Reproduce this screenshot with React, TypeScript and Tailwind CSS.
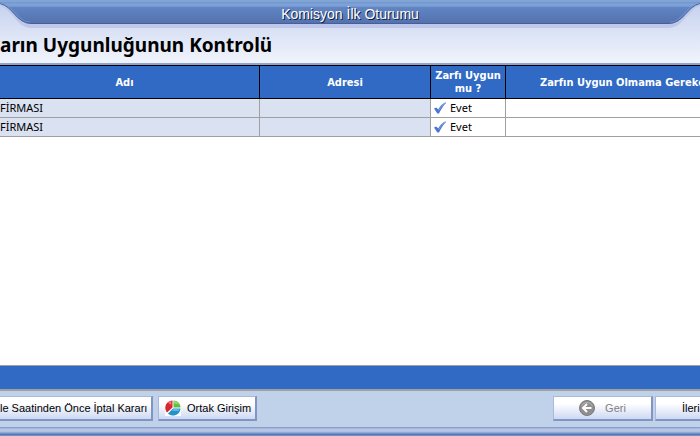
import clsx from "clsx";

const rows = [
  { name: "FİRMASI", address: "", suitable: "Evet", reason: "" },
  { name: "FİRMASI", address: "", suitable: "Evet", reason: "" },
];

const headCell = "border-black px-0.5 py-0 text-center align-middle font-bold";
const cell = "h-[19px] border-b border-[#a0a0a0] px-0 py-0 align-middle leading-4";

function TitleCorner({ flip }: { flip?: boolean }) {
  const id = flip ? "cornerR" : "cornerL";
  return (
    <svg viewBox="0 0 32 28" className={clsx("h-7 w-8 shrink-0", flip && "-scale-x-100")} aria-hidden="true">
      <defs>
        <linearGradient id={id} gradientUnits="userSpaceOnUse" x1="0" y1="0" x2="0" y2="24">
          <stop offset="0" stopColor="#82a6d3" />
          <stop offset="0.083" stopColor="#82a6d3" />
          <stop offset="0.125" stopColor="#648bc9" />
          <stop offset="0.167" stopColor="#8db1e8" />
          <stop offset="0.208" stopColor="#6c94d1" />
          <stop offset="0.25" stopColor="#8aabdc" />
          <stop offset="0.292" stopColor="#6286c1" />
          <stop offset="0.5" stopColor="#5c7fbd" />
          <stop offset="1" stopColor="#5371ac" />
        </linearGradient>
      </defs>
      <path d="M0 3C12 6 16 24 32 24V28C16 28 13 10 0 6Z" fill="#bfc8e9" />
      <path d="M0 0H32V24C16 24 13 6 0 3Z" fill={`url(#${id})`} />
      <path d="M2 4C14 7 17 22 30 22.500" fill="none" stroke="#7aa3dc" strokeOpacity="0.5" strokeWidth="2" />
      <path d="M0 3.500C13 6 16 23.500 32 23.500" fill="none" stroke="#465f9a" />
    </svg>
  );
}

function TitleBar() {
  return (
    <div className="flex">
      <TitleCorner />
      <div className="flex h-7 flex-1 flex-col border-b-4 border-[#bfc8e9]">
        <div className="flex-1 border-b border-[#465f9a] bg-[linear-gradient(#82a6d3_0px,#82a6d3_2px,#648bc9_3px,#8db1e8_4px,#6c94d1_5px,#8aabdc_6px,#6286c1_7px,#5c7fbd_12px,#5371ac_24px)] pt-1.5 text-center text-[14px] leading-[17px] text-white [text-shadow:1px_1px_0_#111b3c]">
          Komisyon İlk Oturumu
        </div>
      </div>
      <TitleCorner flip />
    </div>
  );
}

function CheckIcon() {
  return (
    <svg viewBox="0 0 12 12" className="size-3 shrink-0" aria-hidden="true">
      <path d="M0 6.500L2.300 5.500L4.200 7.500C6 4.500 8.500 1.800 11 0.500L12 1C9 4 7 7.500 5 11.500H3.300Z" fill="#4d74d0" />
      <path d="M11.500 0.800C8.500 3 6.500 6 4.800 8.500" fill="none" stroke="#86a1e0" />
    </svg>
  );
}

function PieIcon() {
  return (
    <svg viewBox="0 0 16 16" className="size-4 shrink-0" aria-hidden="true">
      <rect width="16" height="16" fill="#fff" />
      <path d="M7.500 0.500V7.500L2 12.500C-1.500 8 0.500 1 7.500 0.500Z" fill="#d9252f" />
      <path d="M3 2.800C4 1.800 5 1.200 6.300 1V5Z" fill="#f0787b" />
      <path d="M8.500 0.500C12.500 0.500 15.500 3.500 15.500 7.500H8.500Z" fill="#63bd45" />
      <path d="M9 1C11.500 1.200 13.500 2.500 14.300 4.500L9 3.500Z" fill="#94d670" />
      <path d="M8 8.500H15.500C15 15.500 7 17.500 3 13.500Z" fill="#2491cb" />
      <path d="M8.500 9H14.500L13.500 11H6.800Z" fill="#5ab8e4" />
    </svg>
  );
}

function BackIcon() {
  return (
    <svg viewBox="0 0 16 16" className="size-4 shrink-0" aria-hidden="true">
      <circle cx="8" cy="8" r="7.500" fill="#8f8f8f" stroke="#7b7b7b" />
      <path d="M2.500 6A6 6 0 0 1 13.500 6" fill="none" stroke="#b4b4b4" />
      <path d="M8 4L4 8L8 12M4.500 8H12.500" fill="none" stroke="#fff" strokeWidth="2" />
    </svg>
  );
}

function BarButton({ className, ...props }: React.ComponentProps<"button">) {
  return (
    <button
      type="button"
      className={clsx(
        "flex h-[25px] shrink-0 items-center border border-b-2 border-[#a9b8dc] border-r-[#8194c4] border-b-[#8194c4] bg-linear-to-b from-white from-30% to-[#cdd8f2] whitespace-nowrap",
        className
      )}
      {...props}
    />
  );
}

export default function App() {
  return (
    <div className="flex min-h-screen flex-col overflow-hidden bg-white font-['Liberation_Sans',Arial,sans-serif] text-[11px] text-black">
      <header className="border-b-2 border-[#8da4d3] bg-linear-to-b from-[#c3d0ed] to-[#f1f4fc]">
        <TitleBar />
        <h1 className="h-[35px] pt-[5px] font-['Noto_Sans','Open_Sans',sans-serif] text-[19px] leading-6 font-bold whitespace-nowrap">
          arın Uygunluğunun Kontrolü
        </h1>
      </header>

      <main className="flex-1 font-['Noto_Sans','Open_Sans',sans-serif]">
        <table className="w-full table-fixed border-separate border-spacing-0">
          <colgroup>
            <col className="w-[260px]" />
            <col className="w-[171px]" />
            <col className="w-[75px]" />
            <col />
          </colgroup>
          <thead className="bg-[#316ac5] font-['DejaVu_Sans_Condensed','DejaVu_Sans',sans-serif] text-[11px] leading-[13px] text-white">
            <tr className="h-[34px]">
              <th className={clsx(headCell, "border-y border-r pr-3")}>Adı</th>
              <th className={clsx(headCell, "border-y border-r")}>Adresi</th>
              <th className={clsx(headCell, "border-y border-r")}>Zarfı Uygun mu ?</th>
              <th className="overflow-hidden border-y border-black py-0 pr-0 pl-[34px] text-left align-middle font-bold whitespace-nowrap">
                Zarfın Uygun Olmama Gerekç
              </th>
            </tr>
          </thead>
          <tbody>
            {rows.map((row, i) => (
              <tr key={i}>
                <td className={clsx(cell, "border-r bg-[#dae1f1]")}>{row.name}</td>
                <td className={clsx(cell, "border-r bg-[#dae1f1]")}>{row.address}</td>
                <td className={clsx(cell, "border-r")}>
                  <span className="flex items-center gap-1 pl-[3px]">
                    <CheckIcon />
                    {row.suitable}
                  </span>
                </td>
                <td className={cell}>{row.reason}</td>
              </tr>
            ))}
          </tbody>
        </table>
      </main>

      <div className="h-[26px] border-t border-b-2 border-[#a0a0a0] bg-[#316ac5]" />

      <footer className="bg-[#c0d1ea]">
        <div className="flex h-9 items-start pt-[5px]">
          <BarButton className="w-[153px] border-r-2 border-l-0">le Saatinden Önce İptal Kararı</BarButton>
          <BarButton className="ml-[5px] w-[99px] gap-1.5 border-r-2 pl-1.5">
            <PieIcon />
            Ortak Girişim
          </BarButton>
          <BarButton disabled className="ml-auto w-[100px] justify-center gap-2.5 border-r-2 text-[#808080]">
            <BackIcon />
            Geri
          </BarButton>
          <BarButton className="ml-0.5 w-[45px] border-r-0 pl-[26px]">İleri</BarButton>
        </div>
        <div className="h-[9px] bg-[linear-gradient(#8b9fd0_0px,#8b9fd0_1px,#bdcae6_2px,#aebfe0_5px,#7595cb_6px,#6b8dc6_7px,#3d65a8_8px,#a9bee0_9px)]" />
      </footer>
    </div>
  );
}
